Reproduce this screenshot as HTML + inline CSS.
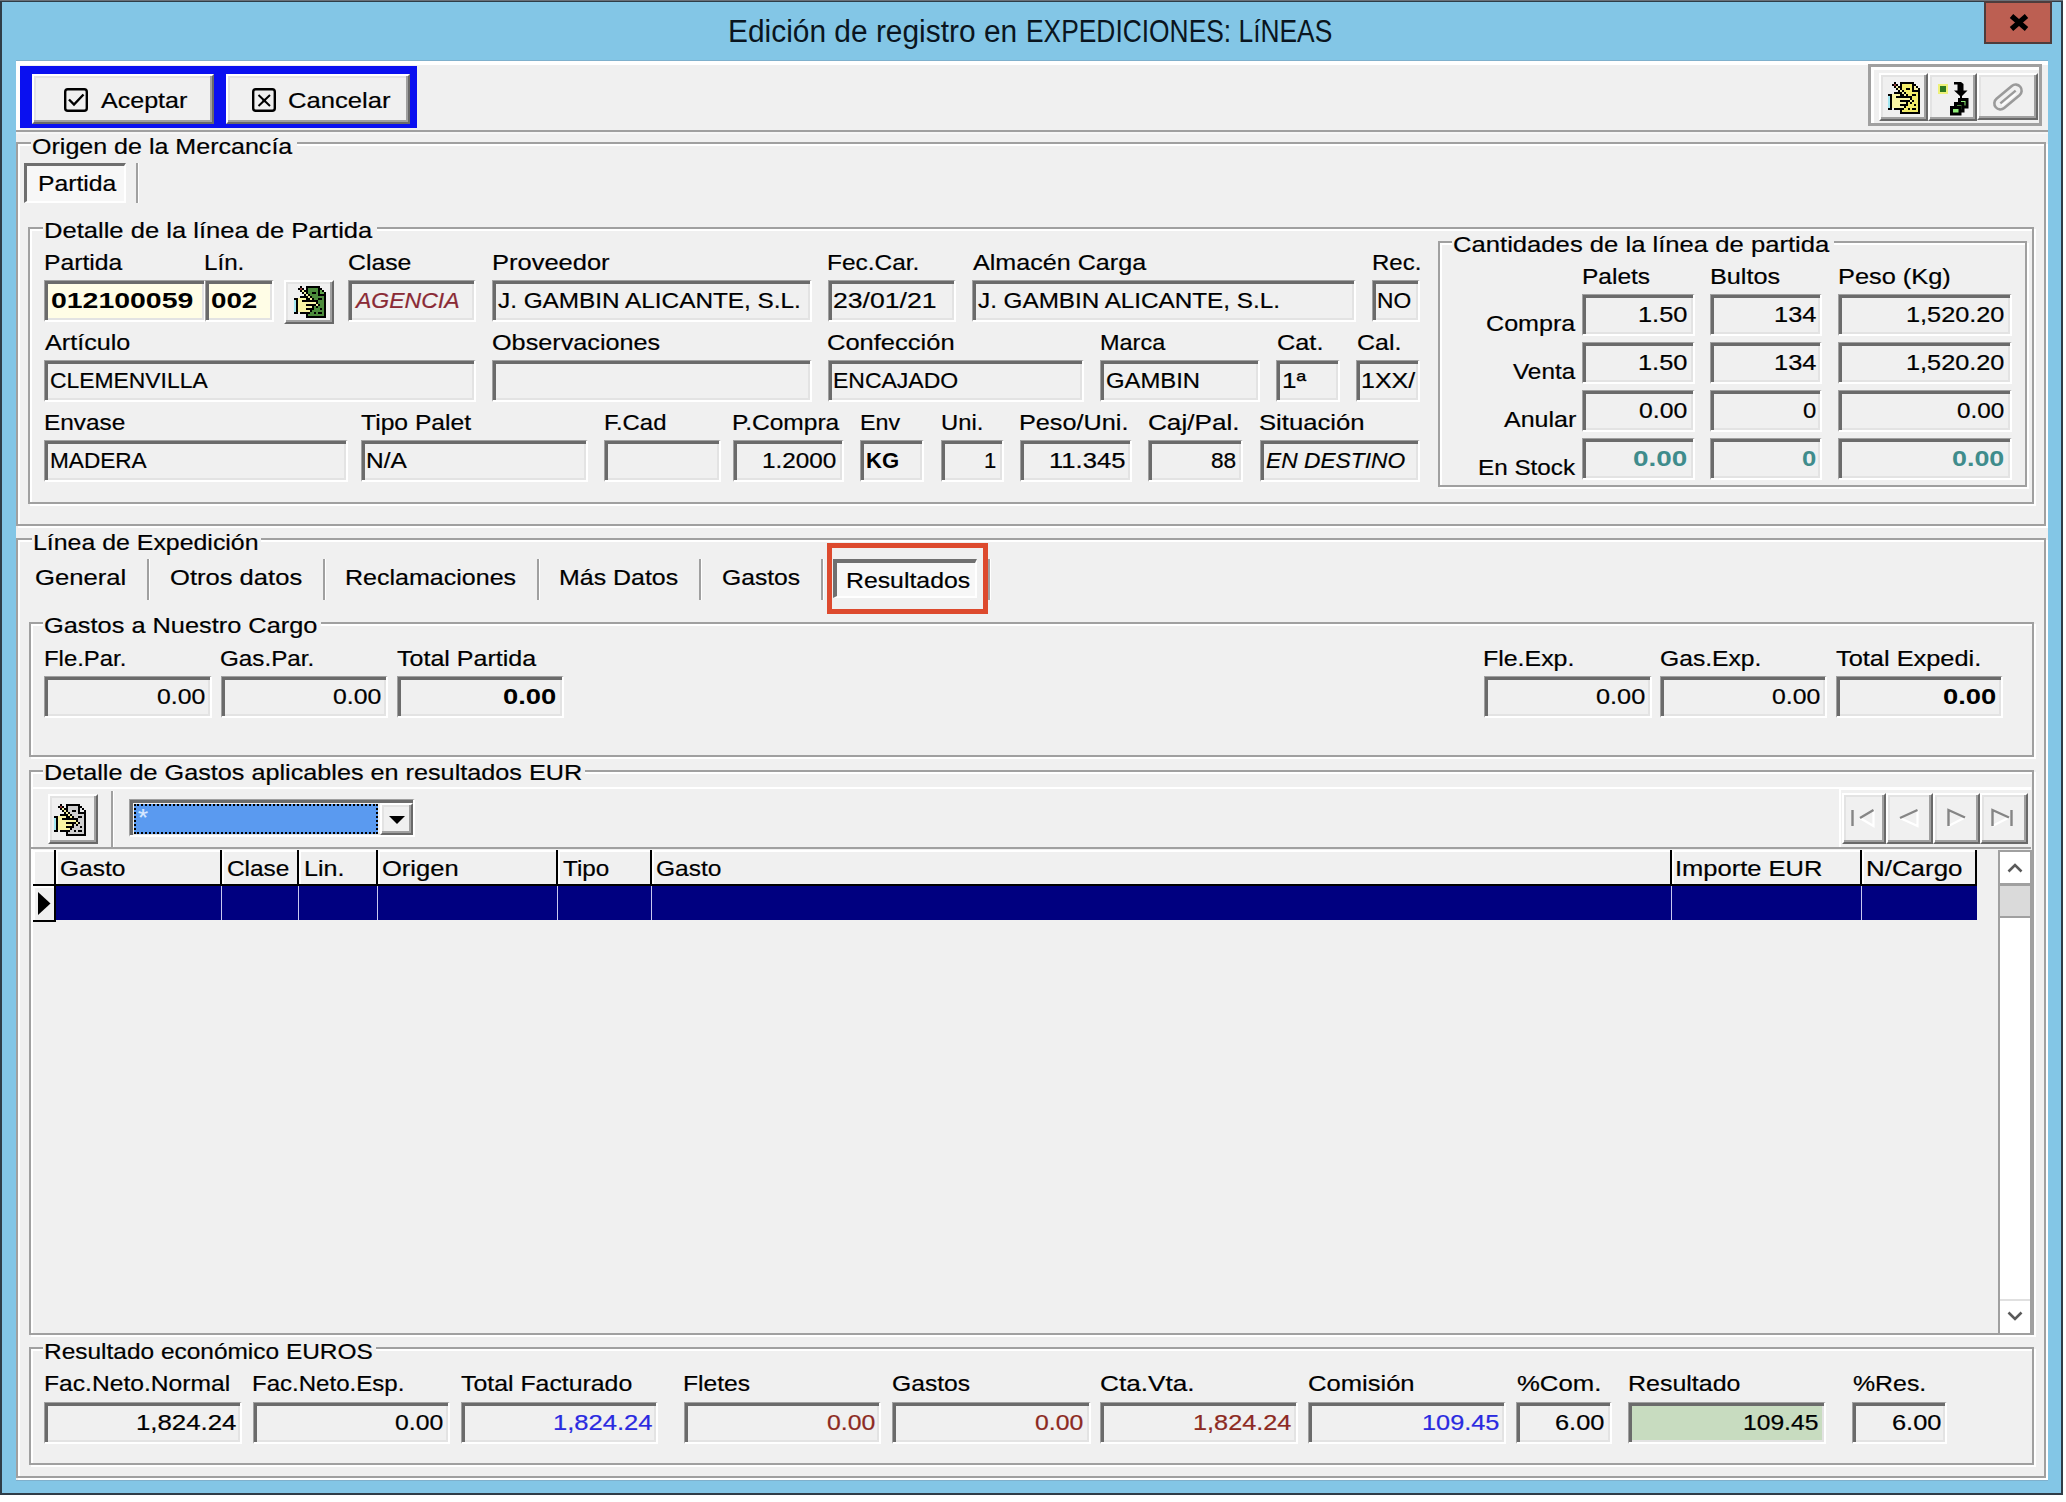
<!DOCTYPE html><html><head><meta charset="utf-8"><style>
html,body{margin:0;padding:0;}
body{width:2066px;height:1502px;position:relative;overflow:hidden;background:#fff;font-family:"Liberation Sans",sans-serif;font-size:22px;line-height:22px;color:#000;}
body>div,body>svg{position:absolute;}
.t{white-space:pre;transform-origin:0 0;-webkit-text-stroke:0.2px currentColor;}
.sk{box-sizing:border-box;border-top:1px solid #a0a0a0;border-left:1px solid #a0a0a0;border-bottom:2px solid #fff;border-right:2px solid #fff;box-shadow:inset 3px 3px 0 #6b6b6b,inset -2px -2px 0 #e3e3e3;}
.rz{box-sizing:border-box;border-top:2px solid #fff;border-left:2px solid #fff;border-bottom:2px solid #696969;border-right:2px solid #696969;box-shadow:inset -2px -2px 0 #a0a0a0,inset 2px 2px 0 #e3e3e3;}
</style></head><body>
<div style="left:0;top:0;width:2063px;height:1495px;background:#2f3d47"></div>
<div style="left:0px;top:0px;width:2063px;height:1px;background:#6a7078;"></div>
<div style="left:2px;top:2px;width:2059px;height:1491px;background:#83c6e6;"></div>
<div style="left:16px;top:60px;width:2032px;height:1px;background:#7fb0cc;"></div>
<div style="left:16px;top:61px;width:2032px;height:1420px;background:#f0f0f0;"></div>
<div style="left:16px;top:1480px;width:2032px;height:1px;background:#7fb0cc;"></div>
<div class="t" style="left:728.07px;top:16px;transform:scaleX(0.9643);font-size:31px;line-height:31px;color:#0a1520;-webkit-text-stroke:0;">Edición de registro en</div>
<div class="t" style="left:1026.30px;top:16px;transform:scaleX(0.8506);font-size:31px;line-height:31px;color:#0a1520;-webkit-text-stroke:0;">EXPEDICIONES: LíNEAS</div>
<div style="left:1984px;top:1px;width:68px;height:43px;box-sizing:border-box;border:2px solid #4e3c3c;background:#bc5f52"></div>
<svg style="left:2007px;top:12px" width="24" height="21" viewBox="0 0 24 21"><path d="M4.5 4 L19.5 17 M19.5 4 L4.5 17" stroke="#000" stroke-width="5.2" stroke-linecap="butt"/></svg>
<div style="left:16px;top:61px;width:2032px;height:4px;background:#ffffff;"></div>
<div style="left:16px;top:61px;width:4px;height:70px;background:#ffffff;"></div>
<div style="left:16px;top:130px;width:2032px;height:2px;background:#a0a0a0;"></div>
<div style="left:16px;top:132px;width:2032px;height:2px;background:#f6f6f6;"></div>
<div style="left:20px;top:66px;width:397px;height:62px;background:#0a10f0;"></div>
<div class="rz" style="left:32px;top:74px;width:182px;height:50px;background:#f0f0f0;"></div>
<div class="rz" style="left:226px;top:74px;width:184px;height:50px;background:#f0f0f0;"></div>
<svg style="left:64px;top:88px" width="26" height="26" viewBox="0 0 26 26"><rect x="1.2" y="1.2" width="21.6" height="21.6" rx="2.6" fill="none" stroke="#000" stroke-width="2.4"/><path d="M5 11.5 L10 16.5 L19.5 6.5" fill="none" stroke="#000" stroke-width="2.4"/></svg>
<div class="t" style="left:101.00px;top:90px;transform:scaleX(1.1392);">Aceptar</div>
<svg style="left:252px;top:88px" width="26" height="26" viewBox="0 0 26 26"><rect x="1.2" y="1.2" width="21.6" height="21.6" rx="2.6" fill="none" stroke="#000" stroke-width="2.4"/><path d="M6.5 7 L18 18 M18 7 L6.5 18" fill="none" stroke="#000" stroke-width="2"/><circle cx="12.25" cy="12.5" r="1.8" fill="#000"/></svg>
<div class="t" style="left:287.84px;top:90px;transform:scaleX(1.1647);">Cancelar</div>
<div style="left:1868px;top:64px;width:174px;height:62px;box-sizing:border-box;border:3px solid #a0a0a0"></div>
<div style="left:1871px;top:67px;width:168px;height:3px;background:#ffffff;"></div>
<div style="left:1871px;top:67px;width:3px;height:56px;background:#ffffff;"></div>
<div class="rz" style="left:1879px;top:73px;width:49px;height:48px;background:#f0f0f0;"></div>
<div class="rz" style="left:1928px;top:73px;width:49px;height:48px;background:#f0f0f0;"></div>
<div class="rz" style="left:1977px;top:73px;width:61px;height:47px;background:#f0f0f0;"></div>
<svg style="left:1888px;top:82px" width="32" height="32" viewBox="0 0 32 32" shape-rendering="crispEdges"><rect x="6" y="0" width="2" height="2" fill="#000"/><rect x="12" y="0" width="14" height="2" fill="#000"/><rect x="4" y="2" width="2" height="2" fill="#000"/><rect x="6" y="2" width="2" height="2" fill="#8e3b3b"/><rect x="8" y="2" width="2" height="2" fill="#000"/><rect x="12" y="2" width="2" height="2" fill="#000"/><rect x="14" y="2" width="10" height="2" fill="#f2ec6a"/><rect x="24" y="2" width="4" height="2" fill="#000"/><rect x="6" y="4" width="2" height="2" fill="#000"/><rect x="8" y="4" width="2" height="2" fill="#f2eea0"/><rect x="10" y="4" width="4" height="2" fill="#000"/><rect x="14" y="4" width="10" height="2" fill="#f2ec6a"/><rect x="24" y="4" width="2" height="2" fill="#000"/><rect x="26" y="4" width="2" height="2" fill="#f6f2a8"/><rect x="28" y="4" width="2" height="2" fill="#000"/><rect x="8" y="6" width="2" height="2" fill="#000"/><rect x="10" y="6" width="2" height="2" fill="#f2eea0"/><rect x="12" y="6" width="2" height="2" fill="#000"/><rect x="14" y="6" width="4" height="2" fill="#f2ec6a"/><rect x="18" y="6" width="4" height="2" fill="#000"/><rect x="22" y="6" width="2" height="2" fill="#f2ec6a"/><rect x="24" y="6" width="2" height="2" fill="#000"/><rect x="26" y="6" width="4" height="2" fill="#f6f2a8"/><rect x="30" y="6" width="2" height="2" fill="#000"/><rect x="10" y="8" width="2" height="2" fill="#000"/><rect x="12" y="8" width="2" height="2" fill="#f2eea0"/><rect x="14" y="8" width="2" height="2" fill="#000"/><rect x="16" y="8" width="8" height="2" fill="#f2ec6a"/><rect x="24" y="8" width="8" height="2" fill="#000"/><rect x="6" y="10" width="8" height="2" fill="#000"/><rect x="14" y="10" width="2" height="2" fill="#f2eea0"/><rect x="16" y="10" width="2" height="2" fill="#000"/><rect x="18" y="10" width="12" height="2" fill="#f2ec6a"/><rect x="30" y="10" width="2" height="2" fill="#000"/><rect x="0" y="12" width="4" height="2" fill="#000"/><rect x="4" y="12" width="8" height="2" fill="#f8f4a4"/><rect x="12" y="12" width="4" height="2" fill="#000"/><rect x="16" y="12" width="2" height="2" fill="#f2eea0"/><rect x="18" y="12" width="2" height="2" fill="#000"/><rect x="20" y="12" width="4" height="2" fill="#f2ec6a"/><rect x="24" y="12" width="4" height="2" fill="#000"/><rect x="28" y="12" width="2" height="2" fill="#f2ec6a"/><rect x="30" y="12" width="2" height="2" fill="#000"/><rect x="0" y="14" width="2" height="2" fill="#a4e8f2"/><rect x="2" y="14" width="2" height="2" fill="#000"/><rect x="4" y="14" width="4" height="2" fill="#f8f4a4"/><rect x="8" y="14" width="16" height="2" fill="#000"/><rect x="24" y="14" width="6" height="2" fill="#f2ec6a"/><rect x="30" y="14" width="2" height="2" fill="#000"/><rect x="0" y="16" width="2" height="2" fill="#a4e8f2"/><rect x="2" y="16" width="2" height="2" fill="#000"/><rect x="4" y="16" width="18" height="2" fill="#f8f4a4"/><rect x="22" y="16" width="2" height="2" fill="#000"/><rect x="24" y="16" width="6" height="2" fill="#f2ec6a"/><rect x="30" y="16" width="2" height="2" fill="#000"/><rect x="0" y="18" width="2" height="2" fill="#a4e8f2"/><rect x="2" y="18" width="2" height="2" fill="#000"/><rect x="4" y="18" width="8" height="2" fill="#f8f4a4"/><rect x="12" y="18" width="10" height="2" fill="#000"/><rect x="22" y="18" width="2" height="2" fill="#f2eea0"/><rect x="24" y="18" width="2" height="2" fill="#000"/><rect x="26" y="18" width="4" height="2" fill="#f2ec6a"/><rect x="30" y="18" width="2" height="2" fill="#000"/><rect x="0" y="20" width="2" height="2" fill="#a4e8f2"/><rect x="2" y="20" width="2" height="2" fill="#000"/><rect x="4" y="20" width="14" height="2" fill="#f8f4a4"/><rect x="18" y="20" width="2" height="2" fill="#000"/><rect x="20" y="20" width="2" height="2" fill="#f2ec6a"/><rect x="22" y="20" width="2" height="2" fill="#000"/><rect x="24" y="20" width="6" height="2" fill="#f2ec6a"/><rect x="30" y="20" width="2" height="2" fill="#000"/><rect x="0" y="22" width="2" height="2" fill="#a4e8f2"/><rect x="2" y="22" width="2" height="2" fill="#000"/><rect x="4" y="22" width="8" height="2" fill="#f8f4a4"/><rect x="12" y="22" width="8" height="2" fill="#000"/><rect x="20" y="22" width="6" height="2" fill="#f2ec6a"/><rect x="26" y="22" width="2" height="2" fill="#000"/><rect x="28" y="22" width="2" height="2" fill="#f2ec6a"/><rect x="30" y="22" width="2" height="2" fill="#000"/><rect x="0" y="24" width="2" height="2" fill="#a4e8f2"/><rect x="2" y="24" width="2" height="2" fill="#000"/><rect x="4" y="24" width="12" height="2" fill="#f8f4a4"/><rect x="16" y="24" width="2" height="2" fill="#000"/><rect x="18" y="24" width="12" height="2" fill="#f2ec6a"/><rect x="30" y="24" width="2" height="2" fill="#000"/><rect x="0" y="26" width="4" height="2" fill="#000"/><rect x="6" y="26" width="10" height="2" fill="#000"/><rect x="16" y="26" width="4" height="2" fill="#f2ec6a"/><rect x="20" y="26" width="2" height="2" fill="#000"/><rect x="22" y="26" width="2" height="2" fill="#f2ec6a"/><rect x="24" y="26" width="4" height="2" fill="#000"/><rect x="28" y="26" width="2" height="2" fill="#f2ec6a"/><rect x="30" y="26" width="2" height="2" fill="#000"/><rect x="12" y="28" width="2" height="2" fill="#000"/><rect x="14" y="28" width="16" height="2" fill="#f2ec6a"/><rect x="30" y="28" width="2" height="2" fill="#000"/><rect x="12" y="30" width="20" height="2" fill="#000"/></svg>
<svg style="left:1936px;top:80px" width="36" height="38" viewBox="0 0 36 38"><rect x="2" y="4" width="10" height="10" fill="#eef27a"/><rect x="4" y="6" width="6" height="6" fill="#2e7a22"/><path d="M18 2 H25 L27.5 4 V10.5 H31.5 L25 17 L18 10.5 H21.5 V4.5 H18 Z" fill="#000"/><rect x="24" y="16" width="2" height="3" fill="#000"/><rect x="23.5" y="19.5" width="7.5" height="7.5" fill="#90ee78" stroke="#000" stroke-width="3"/><rect x="19.5" y="23.5" width="7.5" height="7.5" fill="#4e8a3e" stroke="#000" stroke-width="3"/><rect x="15.5" y="27.5" width="8.5" height="6.5" fill="#90ee78" stroke="#000" stroke-width="3"/></svg>
<svg style="left:1990px;top:80px" width="36" height="34" viewBox="0 0 36 34"><g transform="rotate(-40 18 17)"><rect x="2" y="11" width="32" height="12" rx="6" fill="none" stroke="#9a9a9a" stroke-width="2.6"/><path d="M8 17 H28" stroke="#9a9a9a" stroke-width="2.4"/><path d="M8 19.5 H26" stroke="#fff" stroke-width="1.5"/></g></svg>
<div style="left:18px;top:144px;width:2030px;height:384px;box-sizing:border-box;border:2px solid #fff"></div>
<div style="left:16px;top:142px;width:2030px;height:384px;box-sizing:border-box;border:2px solid #a0a0a0"></div>
<div style="left:31px;top:141px;width:266px;height:6px;background:#f0f0f0;"></div>
<div class="t" style="left:31.86px;top:136px;transform:scaleX(1.1382);">Origen de la Mercancía</div>
<div style="left:24px;top:163px;width:102px;height:40px;box-sizing:border-box;border-top:3px solid #6e6e6e;border-left:3px solid #6e6e6e;border-bottom:2px solid #fff;border-right:2px solid #fff;background:#f7f7f7"></div>
<div class="t" style="left:37.88px;top:173px;transform:scaleX(1.1228);">Partida</div>
<div style="left:136px;top:163px;width:2px;height:40px;background:#a0a0a0;"></div>
<div style="left:138px;top:163px;width:1px;height:40px;background:#ffffff;"></div>
<div style="left:30px;top:229px;width:2006px;height:277px;box-sizing:border-box;border:2px solid #fff"></div>
<div style="left:28px;top:227px;width:2006px;height:277px;box-sizing:border-box;border:2px solid #a0a0a0"></div>
<div style="left:43px;top:226px;width:334px;height:6px;background:#f0f0f0;"></div>
<div class="t" style="left:43.84px;top:220px;transform:scaleX(1.1619);">Detalle de la línea de Partida</div>
<div class="t" style="left:43.88px;top:252px;transform:scaleX(1.1228);">Partida</div>
<div class="t" style="left:203.90px;top:252px;transform:scaleX(1.0988);">Lín.</div>
<div class="t" style="left:347.87px;top:252px;transform:scaleX(1.1271);">Clase</div>
<div class="t" style="left:491.84px;top:252px;transform:scaleX(1.1580);">Proveedor</div>
<div class="t" style="left:826.89px;top:252px;transform:scaleX(1.1108);">Fec.Car.</div>
<div class="t" style="left:973.00px;top:252px;transform:scaleX(1.1418);">Almacén Carga</div>
<div class="t" style="left:1371.91px;top:252px;transform:scaleX(1.0899);">Rec.</div>
<div class="sk" style="left:44px;top:280px;width:162px;height:42px;background:#fffde6;"></div>
<div class="t" style="left:51.00px;top:290px;transform:scaleX(1.2923);font-weight:bold;-webkit-text-stroke:0;">012100059</div>
<div class="sk" style="left:205px;top:280px;width:69px;height:42px;background:#fffde6;"></div>
<div class="t" style="left:211.00px;top:290px;transform:scaleX(1.2613);font-weight:bold;-webkit-text-stroke:0;">002</div>
<div class="rz" style="left:284px;top:280px;width:50px;height:44px;background:#f0f0f0;"></div>
<svg style="left:294px;top:286px" width="32" height="32" viewBox="0 0 32 32" shape-rendering="crispEdges"><rect x="6" y="0" width="2" height="2" fill="#000"/><rect x="12" y="0" width="14" height="2" fill="#000"/><rect x="4" y="2" width="2" height="2" fill="#000"/><rect x="6" y="2" width="2" height="2" fill="#8e3b3b"/><rect x="8" y="2" width="2" height="2" fill="#000"/><rect x="12" y="2" width="2" height="2" fill="#000"/><rect x="14" y="2" width="10" height="2" fill="#4c8c3c"/><rect x="24" y="2" width="4" height="2" fill="#000"/><rect x="6" y="4" width="2" height="2" fill="#000"/><rect x="8" y="4" width="2" height="2" fill="#f2eea0"/><rect x="10" y="4" width="4" height="2" fill="#000"/><rect x="14" y="4" width="10" height="2" fill="#4c8c3c"/><rect x="24" y="4" width="2" height="2" fill="#000"/><rect x="26" y="4" width="2" height="2" fill="#5ea44a"/><rect x="28" y="4" width="2" height="2" fill="#000"/><rect x="8" y="6" width="2" height="2" fill="#000"/><rect x="10" y="6" width="2" height="2" fill="#f2eea0"/><rect x="12" y="6" width="2" height="2" fill="#000"/><rect x="14" y="6" width="4" height="2" fill="#4c8c3c"/><rect x="18" y="6" width="4" height="2" fill="#000"/><rect x="22" y="6" width="2" height="2" fill="#4c8c3c"/><rect x="24" y="6" width="2" height="2" fill="#000"/><rect x="26" y="6" width="4" height="2" fill="#5ea44a"/><rect x="30" y="6" width="2" height="2" fill="#000"/><rect x="10" y="8" width="2" height="2" fill="#000"/><rect x="12" y="8" width="2" height="2" fill="#f2eea0"/><rect x="14" y="8" width="2" height="2" fill="#000"/><rect x="16" y="8" width="8" height="2" fill="#4c8c3c"/><rect x="24" y="8" width="8" height="2" fill="#000"/><rect x="6" y="10" width="8" height="2" fill="#000"/><rect x="14" y="10" width="2" height="2" fill="#f2eea0"/><rect x="16" y="10" width="2" height="2" fill="#000"/><rect x="18" y="10" width="12" height="2" fill="#4c8c3c"/><rect x="30" y="10" width="2" height="2" fill="#000"/><rect x="0" y="12" width="4" height="2" fill="#000"/><rect x="4" y="12" width="8" height="2" fill="#f8f4a4"/><rect x="12" y="12" width="4" height="2" fill="#000"/><rect x="16" y="12" width="2" height="2" fill="#f2eea0"/><rect x="18" y="12" width="2" height="2" fill="#000"/><rect x="20" y="12" width="4" height="2" fill="#4c8c3c"/><rect x="24" y="12" width="4" height="2" fill="#000"/><rect x="28" y="12" width="2" height="2" fill="#4c8c3c"/><rect x="30" y="12" width="2" height="2" fill="#000"/><rect x="0" y="14" width="2" height="2" fill="#a4e8f2"/><rect x="2" y="14" width="2" height="2" fill="#000"/><rect x="4" y="14" width="4" height="2" fill="#f8f4a4"/><rect x="8" y="14" width="16" height="2" fill="#000"/><rect x="24" y="14" width="6" height="2" fill="#4c8c3c"/><rect x="30" y="14" width="2" height="2" fill="#000"/><rect x="0" y="16" width="2" height="2" fill="#a4e8f2"/><rect x="2" y="16" width="2" height="2" fill="#000"/><rect x="4" y="16" width="18" height="2" fill="#f8f4a4"/><rect x="22" y="16" width="2" height="2" fill="#000"/><rect x="24" y="16" width="6" height="2" fill="#4c8c3c"/><rect x="30" y="16" width="2" height="2" fill="#000"/><rect x="0" y="18" width="2" height="2" fill="#a4e8f2"/><rect x="2" y="18" width="2" height="2" fill="#000"/><rect x="4" y="18" width="8" height="2" fill="#f8f4a4"/><rect x="12" y="18" width="10" height="2" fill="#000"/><rect x="22" y="18" width="2" height="2" fill="#f2eea0"/><rect x="24" y="18" width="2" height="2" fill="#000"/><rect x="26" y="18" width="4" height="2" fill="#4c8c3c"/><rect x="30" y="18" width="2" height="2" fill="#000"/><rect x="0" y="20" width="2" height="2" fill="#a4e8f2"/><rect x="2" y="20" width="2" height="2" fill="#000"/><rect x="4" y="20" width="14" height="2" fill="#f8f4a4"/><rect x="18" y="20" width="2" height="2" fill="#000"/><rect x="20" y="20" width="2" height="2" fill="#4c8c3c"/><rect x="22" y="20" width="2" height="2" fill="#000"/><rect x="24" y="20" width="6" height="2" fill="#4c8c3c"/><rect x="30" y="20" width="2" height="2" fill="#000"/><rect x="0" y="22" width="2" height="2" fill="#a4e8f2"/><rect x="2" y="22" width="2" height="2" fill="#000"/><rect x="4" y="22" width="8" height="2" fill="#f8f4a4"/><rect x="12" y="22" width="8" height="2" fill="#000"/><rect x="20" y="22" width="6" height="2" fill="#4c8c3c"/><rect x="26" y="22" width="2" height="2" fill="#000"/><rect x="28" y="22" width="2" height="2" fill="#4c8c3c"/><rect x="30" y="22" width="2" height="2" fill="#000"/><rect x="0" y="24" width="2" height="2" fill="#a4e8f2"/><rect x="2" y="24" width="2" height="2" fill="#000"/><rect x="4" y="24" width="12" height="2" fill="#f8f4a4"/><rect x="16" y="24" width="2" height="2" fill="#000"/><rect x="18" y="24" width="12" height="2" fill="#4c8c3c"/><rect x="30" y="24" width="2" height="2" fill="#000"/><rect x="0" y="26" width="4" height="2" fill="#000"/><rect x="6" y="26" width="10" height="2" fill="#000"/><rect x="16" y="26" width="4" height="2" fill="#4c8c3c"/><rect x="20" y="26" width="2" height="2" fill="#000"/><rect x="22" y="26" width="2" height="2" fill="#4c8c3c"/><rect x="24" y="26" width="4" height="2" fill="#000"/><rect x="28" y="26" width="2" height="2" fill="#4c8c3c"/><rect x="30" y="26" width="2" height="2" fill="#000"/><rect x="12" y="28" width="2" height="2" fill="#000"/><rect x="14" y="28" width="16" height="2" fill="#4c8c3c"/><rect x="30" y="28" width="2" height="2" fill="#000"/><rect x="12" y="30" width="20" height="2" fill="#000"/></svg>
<div class="sk" style="left:348px;top:280px;width:128px;height:42px;background:#f0f0f0;"></div>
<div class="t" style="left:356.09px;top:290px;transform:scaleX(1.0464);font-style:italic;color:#8a2a35;">AGENCIA</div>
<div class="sk" style="left:492px;top:280px;width:320px;height:42px;background:#f0f0f0;"></div>
<div class="t" style="left:498.00px;top:290px;transform:scaleX(1.1060);">J. GAMBIN ALICANTE, S.L.</div>
<div class="sk" style="left:828px;top:280px;width:128px;height:42px;background:#f0f0f0;"></div>
<div class="t" style="left:832.79px;top:290px;transform:scaleX(1.2085);">23/01/21</div>
<div class="sk" style="left:972px;top:280px;width:384px;height:42px;background:#f0f0f0;"></div>
<div class="t" style="left:978.00px;top:290px;transform:scaleX(1.1024);">J. GAMBIN ALICANTE, S.L.</div>
<div class="sk" style="left:1372px;top:280px;width:48px;height:42px;background:#f0f0f0;"></div>
<div class="t" style="left:1376.97px;top:290px;transform:scaleX(1.0349);">NO</div>
<div class="t" style="left:45.00px;top:332px;transform:scaleX(1.1433);">Artículo</div>
<div class="t" style="left:491.85px;top:332px;transform:scaleX(1.1459);">Observaciones</div>
<div class="t" style="left:826.84px;top:332px;transform:scaleX(1.1592);">Confección</div>
<div class="t" style="left:1099.93px;top:332px;transform:scaleX(1.0675);">Marca</div>
<div class="t" style="left:1276.85px;top:332px;transform:scaleX(1.1508);">Cat.</div>
<div class="t" style="left:1356.87px;top:332px;transform:scaleX(1.1348);">Cal.</div>
<div class="sk" style="left:44px;top:360px;width:432px;height:42px;background:#f0f0f0;"></div>
<div class="t" style="left:49.96px;top:370px;transform:scaleX(1.0401);">CLEMENVILLA</div>
<div class="sk" style="left:492px;top:360px;width:320px;height:42px;background:#f0f0f0;"></div>
<div class="sk" style="left:828px;top:360px;width:256px;height:42px;background:#f0f0f0;"></div>
<div class="t" style="left:832.96px;top:370px;transform:scaleX(1.0448);">ENCAJADO</div>
<div class="sk" style="left:1100px;top:360px;width:160px;height:42px;background:#f0f0f0;"></div>
<div class="t" style="left:1105.92px;top:370px;transform:scaleX(1.0836);">GAMBIN</div>
<div class="sk" style="left:1276px;top:360px;width:64px;height:42px;background:#f0f0f0;"></div>
<div class="t" style="left:1281.81px;top:370px;transform:scaleX(1.1860);">1ª</div>
<div class="sk" style="left:1356px;top:360px;width:64px;height:42px;background:#f0f0f0;"></div>
<div class="t" style="left:1360.87px;top:370px;transform:scaleX(1.1349);">1XX/</div>
<div class="t" style="left:43.89px;top:412px;transform:scaleX(1.1089);">Envase</div>
<div class="t" style="left:361.00px;top:412px;transform:scaleX(1.1210);">Tipo Palet</div>
<div class="t" style="left:603.91px;top:412px;transform:scaleX(1.0863);">F.Cad</div>
<div class="t" style="left:731.88px;top:412px;transform:scaleX(1.1150);">P.Compra</div>
<div class="t" style="left:859.94px;top:412px;transform:scaleX(1.0566);">Env</div>
<div class="t" style="left:940.92px;top:412px;transform:scaleX(1.0808);">Uni.</div>
<div class="t" style="left:1018.85px;top:412px;transform:scaleX(1.1472);">Peso/Uni.</div>
<div class="t" style="left:1147.81px;top:412px;transform:scaleX(1.1879);">Caj/Pal.</div>
<div class="t" style="left:1258.83px;top:412px;transform:scaleX(1.1669);">Situación</div>
<div class="sk" style="left:44px;top:440px;width:304px;height:42px;background:#f0f0f0;"></div>
<div class="t" style="left:49.97px;top:450px;transform:scaleX(1.0273);">MADERA</div>
<div class="sk" style="left:361px;top:440px;width:227px;height:42px;background:#f0f0f0;"></div>
<div class="t" style="left:365.89px;top:450px;transform:scaleX(1.1111);">N/A</div>
<div class="sk" style="left:604px;top:440px;width:117px;height:42px;background:#f0f0f0;"></div>
<div class="sk" style="left:733px;top:440px;width:111px;height:42px;background:#f0f0f0;"></div>
<div class="t" style="left:761.89px;top:450px;transform:scaleX(1.1052);">1.2000</div>
<div class="sk" style="left:860px;top:440px;width:64px;height:42px;background:#f0f0f0;"></div>
<div class="t" style="left:866.00px;top:450px;transform:scaleX(1.0036);font-weight:bold;-webkit-text-stroke:0;">KG</div>
<div class="sk" style="left:941px;top:440px;width:63px;height:42px;background:#f0f0f0;"></div>
<div class="t" style="left:984.00px;top:450px;transform:scaleX(1.0000);">1</div>
<div class="sk" style="left:1020px;top:440px;width:112px;height:42px;background:#f0f0f0;"></div>
<div class="t" style="left:1048.84px;top:450px;transform:scaleX(1.1642);">11.345</div>
<div class="sk" style="left:1148px;top:440px;width:95px;height:42px;background:#f0f0f0;"></div>
<div class="t" style="left:1211.00px;top:450px;transform:scaleX(1.0316);">88</div>
<div class="sk" style="left:1260px;top:440px;width:160px;height:42px;background:#f0f0f0;"></div>
<div class="t" style="left:1266.00px;top:450px;transform:scaleX(1.0346);font-style:italic;">EN DESTINO</div>
<div style="left:1440px;top:243px;width:589px;height:246px;box-sizing:border-box;border:2px solid #fff"></div>
<div style="left:1438px;top:241px;width:589px;height:246px;box-sizing:border-box;border:2px solid #a0a0a0"></div>
<div style="left:1452px;top:240px;width:382px;height:6px;background:#f0f0f0;"></div>
<div class="t" style="left:1452.83px;top:234px;transform:scaleX(1.1653);">Cantidades de la línea de partida</div>
<div class="t" style="left:1581.89px;top:266px;transform:scaleX(1.1140);">Palets</div>
<div class="t" style="left:1709.85px;top:266px;transform:scaleX(1.1472);">Bultos</div>
<div class="t" style="left:1837.85px;top:266px;transform:scaleX(1.1519);">Peso (Kg)</div>
<div class="t" style="left:1485.86px;top:313px;transform:scaleX(1.1409);">Compra</div>
<div class="sk" style="left:1582px;top:294px;width:113px;height:42px;background:#f0f0f0;"></div>
<div class="t" style="left:1637.85px;top:304px;transform:scaleX(1.1543);">1.50</div>
<div class="sk" style="left:1710px;top:294px;width:112px;height:42px;background:#f0f0f0;"></div>
<div class="t" style="left:1773.84px;top:304px;transform:scaleX(1.1559);">134</div>
<div class="sk" style="left:1838px;top:294px;width:174px;height:42px;background:#f0f0f0;"></div>
<div class="t" style="left:1905.85px;top:304px;transform:scaleX(1.1493);">1,520.20</div>
<div class="t" style="left:1513.00px;top:361px;transform:scaleX(1.1044);">Venta</div>
<div class="sk" style="left:1582px;top:342px;width:113px;height:42px;background:#f0f0f0;"></div>
<div class="t" style="left:1637.85px;top:352px;transform:scaleX(1.1543);">1.50</div>
<div class="sk" style="left:1710px;top:342px;width:112px;height:42px;background:#f0f0f0;"></div>
<div class="t" style="left:1773.84px;top:352px;transform:scaleX(1.1559);">134</div>
<div class="sk" style="left:1838px;top:342px;width:174px;height:42px;background:#f0f0f0;"></div>
<div class="t" style="left:1905.85px;top:352px;transform:scaleX(1.1493);">1,520.20</div>
<div class="t" style="left:1504.00px;top:409px;transform:scaleX(1.1380);">Anular</div>
<div class="sk" style="left:1582px;top:390px;width:113px;height:42px;background:#f0f0f0;"></div>
<div class="t" style="left:1639.00px;top:400px;transform:scaleX(1.1272);">0.00</div>
<div class="sk" style="left:1710px;top:390px;width:112px;height:42px;background:#f0f0f0;"></div>
<div class="t" style="left:1803.00px;top:400px;transform:scaleX(1.0833);">0</div>
<div class="sk" style="left:1838px;top:390px;width:174px;height:42px;background:#f0f0f0;"></div>
<div class="t" style="left:1957.00px;top:400px;transform:scaleX(1.1037);">0.00</div>
<div class="t" style="left:1477.90px;top:457px;transform:scaleX(1.1017);">En Stock</div>
<div class="sk" style="left:1582px;top:438px;width:113px;height:42px;background:#f0f0f0;"></div>
<div class="t" style="left:1633.00px;top:448px;transform:scaleX(1.2681);font-weight:bold;-webkit-text-stroke:0;color:#3f8c8c;">0.00</div>
<div class="sk" style="left:1710px;top:438px;width:112px;height:42px;background:#f0f0f0;"></div>
<div class="t" style="left:1802.00px;top:448px;transform:scaleX(1.1667);font-weight:bold;-webkit-text-stroke:0;color:#3f8c8c;">0</div>
<div class="sk" style="left:1838px;top:438px;width:174px;height:42px;background:#f0f0f0;"></div>
<div class="t" style="left:1952.00px;top:448px;transform:scaleX(1.2211);font-weight:bold;-webkit-text-stroke:0;color:#3f8c8c;">0.00</div>
<div style="left:18px;top:540px;width:2030px;height:940px;box-sizing:border-box;border:2px solid #fff"></div>
<div style="left:16px;top:538px;width:2030px;height:940px;box-sizing:border-box;border:2px solid #a0a0a0"></div>
<div style="left:32px;top:537px;width:229px;height:6px;background:#f0f0f0;"></div>
<div class="t" style="left:32.87px;top:532px;transform:scaleX(1.1312);">Línea de Expedición</div>
<div class="t" style="left:34.83px;top:567px;transform:scaleX(1.1652);">General</div>
<div class="t" style="left:169.84px;top:567px;transform:scaleX(1.1622);">Otros datos</div>
<div class="t" style="left:344.86px;top:567px;transform:scaleX(1.1379);">Reclamaciones</div>
<div class="t" style="left:558.87px;top:567px;transform:scaleX(1.1330);">Más Datos</div>
<div class="t" style="left:721.88px;top:567px;transform:scaleX(1.1209);">Gastos</div>
<div style="left:147px;top:559px;width:2px;height:41px;background:#a0a0a0;"></div>
<div style="left:149px;top:559px;width:1px;height:41px;background:#ffffff;"></div>
<div style="left:323px;top:559px;width:2px;height:41px;background:#a0a0a0;"></div>
<div style="left:325px;top:559px;width:1px;height:41px;background:#ffffff;"></div>
<div style="left:537px;top:559px;width:2px;height:41px;background:#a0a0a0;"></div>
<div style="left:539px;top:559px;width:1px;height:41px;background:#ffffff;"></div>
<div style="left:699px;top:559px;width:2px;height:41px;background:#a0a0a0;"></div>
<div style="left:701px;top:559px;width:1px;height:41px;background:#ffffff;"></div>
<div style="left:821px;top:559px;width:2px;height:41px;background:#a0a0a0;"></div>
<div style="left:823px;top:559px;width:1px;height:41px;background:#ffffff;"></div>
<div style="left:988px;top:559px;width:2px;height:41px;background:#a0a0a0;"></div>
<div style="left:990px;top:559px;width:1px;height:41px;background:#ffffff;"></div>
<div style="left:833px;top:559px;width:144px;height:39px;box-sizing:border-box;border-top:4px solid #707070;border-left:4px solid #707070;border-bottom:2px solid #fff;border-right:2px solid #fff;background:#f7f7f7"></div>
<div class="t" style="left:845.87px;top:570px;transform:scaleX(1.1278);">Resultados</div>
<div style="left:827px;top:543px;width:161px;height:71px;box-sizing:border-box;border:5px solid #dd4a2e"></div>
<div style="left:31px;top:624px;width:2005px;height:135px;box-sizing:border-box;border:2px solid #fff"></div>
<div style="left:29px;top:622px;width:2005px;height:135px;box-sizing:border-box;border:2px solid #a0a0a0"></div>
<div style="left:43px;top:621px;width:278px;height:6px;background:#f0f0f0;"></div>
<div class="t" style="left:43.85px;top:615px;transform:scaleX(1.1526);">Gastos a Nuestro Cargo</div>
<div class="t" style="left:43.91px;top:648px;transform:scaleX(1.0856);">Fle.Par.</div>
<div class="t" style="left:219.90px;top:648px;transform:scaleX(1.1020);">Gas.Par.</div>
<div class="t" style="left:397.00px;top:648px;transform:scaleX(1.1377);">Total Partida</div>
<div class="t" style="left:1482.87px;top:648px;transform:scaleX(1.1326);">Fle.Exp.</div>
<div class="t" style="left:1659.88px;top:648px;transform:scaleX(1.1203);">Gas.Exp.</div>
<div class="t" style="left:1836.00px;top:648px;transform:scaleX(1.1534);">Total Expedi.</div>
<div class="sk" style="left:44px;top:676px;width:168px;height:42px;background:#f0f0f0;"></div>
<div class="t" style="left:157.00px;top:686px;transform:scaleX(1.1272);">0.00</div>
<div class="sk" style="left:221px;top:676px;width:167px;height:42px;background:#f0f0f0;"></div>
<div class="t" style="left:333.00px;top:686px;transform:scaleX(1.1272);">0.00</div>
<div class="sk" style="left:397px;top:676px;width:167px;height:42px;background:#f0f0f0;"></div>
<div class="t" style="left:503.00px;top:686px;transform:scaleX(1.2446);font-weight:bold;-webkit-text-stroke:0;">0.00</div>
<div class="sk" style="left:1484px;top:676px;width:168px;height:42px;background:#f0f0f0;"></div>
<div class="t" style="left:1596.00px;top:686px;transform:scaleX(1.1507);">0.00</div>
<div class="sk" style="left:1660px;top:676px;width:167px;height:42px;background:#f0f0f0;"></div>
<div class="t" style="left:1772.00px;top:686px;transform:scaleX(1.1272);">0.00</div>
<div class="sk" style="left:1836px;top:676px;width:167px;height:42px;background:#f0f0f0;"></div>
<div class="t" style="left:1943.00px;top:686px;transform:scaleX(1.2446);font-weight:bold;-webkit-text-stroke:0;">0.00</div>
<div style="left:31px;top:772px;width:2005px;height:565px;box-sizing:border-box;border:2px solid #fff"></div>
<div style="left:29px;top:770px;width:2005px;height:565px;box-sizing:border-box;border:2px solid #a0a0a0"></div>
<div style="left:43px;top:769px;width:542px;height:6px;background:#f0f0f0;"></div>
<div class="t" style="left:43.85px;top:762px;transform:scaleX(1.1460);">Detalle de Gastos aplicables en resultados EUR</div>
<div style="left:31px;top:787px;width:2000px;height:2px;background:#ffffff;"></div>
<div style="left:31px;top:787px;width:2px;height:62px;background:#ffffff;"></div>
<div style="left:31px;top:847px;width:2000px;height:2px;background:#a0a0a0;"></div>
<div style="left:111px;top:791px;width:2px;height:56px;background:#a0a0a0;"></div>
<div style="left:113px;top:791px;width:1px;height:56px;background:#ffffff;"></div>
<div class="rz" style="left:48px;top:794px;width:50px;height:50px;background:#f0f0f0;"></div>
<svg style="left:54px;top:804px" width="32" height="32" viewBox="0 0 32 32" shape-rendering="crispEdges"><rect x="6" y="0" width="2" height="2" fill="#000"/><rect x="12" y="0" width="14" height="2" fill="#000"/><rect x="4" y="2" width="2" height="2" fill="#000"/><rect x="6" y="2" width="2" height="2" fill="#8e3b3b"/><rect x="8" y="2" width="2" height="2" fill="#000"/><rect x="12" y="2" width="2" height="2" fill="#000"/><rect x="14" y="2" width="10" height="2" fill="#cfcfcf"/><rect x="24" y="2" width="4" height="2" fill="#000"/><rect x="6" y="4" width="2" height="2" fill="#000"/><rect x="8" y="4" width="2" height="2" fill="#f2eea0"/><rect x="10" y="4" width="4" height="2" fill="#000"/><rect x="14" y="4" width="10" height="2" fill="#cfcfcf"/><rect x="24" y="4" width="2" height="2" fill="#000"/><rect x="26" y="4" width="2" height="2" fill="#e6e6e6"/><rect x="28" y="4" width="2" height="2" fill="#000"/><rect x="8" y="6" width="2" height="2" fill="#000"/><rect x="10" y="6" width="2" height="2" fill="#f2eea0"/><rect x="12" y="6" width="2" height="2" fill="#000"/><rect x="14" y="6" width="4" height="2" fill="#cfcfcf"/><rect x="18" y="6" width="4" height="2" fill="#000"/><rect x="22" y="6" width="2" height="2" fill="#cfcfcf"/><rect x="24" y="6" width="2" height="2" fill="#000"/><rect x="26" y="6" width="4" height="2" fill="#e6e6e6"/><rect x="30" y="6" width="2" height="2" fill="#000"/><rect x="10" y="8" width="2" height="2" fill="#000"/><rect x="12" y="8" width="2" height="2" fill="#f2eea0"/><rect x="14" y="8" width="2" height="2" fill="#000"/><rect x="16" y="8" width="8" height="2" fill="#cfcfcf"/><rect x="24" y="8" width="8" height="2" fill="#000"/><rect x="6" y="10" width="8" height="2" fill="#000"/><rect x="14" y="10" width="2" height="2" fill="#f2eea0"/><rect x="16" y="10" width="2" height="2" fill="#000"/><rect x="18" y="10" width="12" height="2" fill="#cfcfcf"/><rect x="30" y="10" width="2" height="2" fill="#000"/><rect x="0" y="12" width="4" height="2" fill="#000"/><rect x="4" y="12" width="8" height="2" fill="#f8f4a4"/><rect x="12" y="12" width="4" height="2" fill="#000"/><rect x="16" y="12" width="2" height="2" fill="#f2eea0"/><rect x="18" y="12" width="2" height="2" fill="#000"/><rect x="20" y="12" width="4" height="2" fill="#cfcfcf"/><rect x="24" y="12" width="4" height="2" fill="#000"/><rect x="28" y="12" width="2" height="2" fill="#cfcfcf"/><rect x="30" y="12" width="2" height="2" fill="#000"/><rect x="0" y="14" width="2" height="2" fill="#a4e8f2"/><rect x="2" y="14" width="2" height="2" fill="#000"/><rect x="4" y="14" width="4" height="2" fill="#f8f4a4"/><rect x="8" y="14" width="16" height="2" fill="#000"/><rect x="24" y="14" width="6" height="2" fill="#cfcfcf"/><rect x="30" y="14" width="2" height="2" fill="#000"/><rect x="0" y="16" width="2" height="2" fill="#a4e8f2"/><rect x="2" y="16" width="2" height="2" fill="#000"/><rect x="4" y="16" width="18" height="2" fill="#f8f4a4"/><rect x="22" y="16" width="2" height="2" fill="#000"/><rect x="24" y="16" width="6" height="2" fill="#cfcfcf"/><rect x="30" y="16" width="2" height="2" fill="#000"/><rect x="0" y="18" width="2" height="2" fill="#a4e8f2"/><rect x="2" y="18" width="2" height="2" fill="#000"/><rect x="4" y="18" width="8" height="2" fill="#f8f4a4"/><rect x="12" y="18" width="10" height="2" fill="#000"/><rect x="22" y="18" width="2" height="2" fill="#f2eea0"/><rect x="24" y="18" width="2" height="2" fill="#000"/><rect x="26" y="18" width="4" height="2" fill="#cfcfcf"/><rect x="30" y="18" width="2" height="2" fill="#000"/><rect x="0" y="20" width="2" height="2" fill="#a4e8f2"/><rect x="2" y="20" width="2" height="2" fill="#000"/><rect x="4" y="20" width="14" height="2" fill="#f8f4a4"/><rect x="18" y="20" width="2" height="2" fill="#000"/><rect x="20" y="20" width="2" height="2" fill="#cfcfcf"/><rect x="22" y="20" width="2" height="2" fill="#000"/><rect x="24" y="20" width="6" height="2" fill="#cfcfcf"/><rect x="30" y="20" width="2" height="2" fill="#000"/><rect x="0" y="22" width="2" height="2" fill="#a4e8f2"/><rect x="2" y="22" width="2" height="2" fill="#000"/><rect x="4" y="22" width="8" height="2" fill="#f8f4a4"/><rect x="12" y="22" width="8" height="2" fill="#000"/><rect x="20" y="22" width="6" height="2" fill="#cfcfcf"/><rect x="26" y="22" width="2" height="2" fill="#000"/><rect x="28" y="22" width="2" height="2" fill="#cfcfcf"/><rect x="30" y="22" width="2" height="2" fill="#000"/><rect x="0" y="24" width="2" height="2" fill="#a4e8f2"/><rect x="2" y="24" width="2" height="2" fill="#000"/><rect x="4" y="24" width="12" height="2" fill="#f8f4a4"/><rect x="16" y="24" width="2" height="2" fill="#000"/><rect x="18" y="24" width="12" height="2" fill="#cfcfcf"/><rect x="30" y="24" width="2" height="2" fill="#000"/><rect x="0" y="26" width="4" height="2" fill="#000"/><rect x="6" y="26" width="10" height="2" fill="#000"/><rect x="16" y="26" width="4" height="2" fill="#cfcfcf"/><rect x="20" y="26" width="2" height="2" fill="#000"/><rect x="22" y="26" width="2" height="2" fill="#cfcfcf"/><rect x="24" y="26" width="4" height="2" fill="#000"/><rect x="28" y="26" width="2" height="2" fill="#cfcfcf"/><rect x="30" y="26" width="2" height="2" fill="#000"/><rect x="12" y="28" width="2" height="2" fill="#000"/><rect x="14" y="28" width="16" height="2" fill="#cfcfcf"/><rect x="30" y="28" width="2" height="2" fill="#000"/><rect x="12" y="30" width="20" height="2" fill="#000"/></svg>
<div class="sk" style="left:129px;top:799px;width:286px;height:38px;background:#f0f0f0;"></div>
<div style="left:134px;top:804px;width:244px;height:30px;box-sizing:border-box;background:#5a9af0;outline:2px dotted #000;outline-offset:-2px"></div>
<div class="t" style="left:138.00px;top:807px;transform:scaleX(1.1200);font-size:23px;line-height:23px;color:#d8e8ff;">*</div>
<div class="rz" style="left:380px;top:803px;width:33px;height:32px;background:#f0f0f0;"></div>
<svg style="left:388px;top:815px" width="18" height="10" viewBox="0 0 18 10"><path d="M1 1 L17 1 L9 9 Z" fill="#000"/></svg>
<div style="left:1839px;top:788px;width:192px;height:2px;background:#ffffff;"></div>
<div style="left:1839px;top:788px;width:2px;height:59px;background:#ffffff;"></div>
<div class="rz" style="left:1842px;top:793px;width:44px;height:51px;background:#f0f0f0;"></div>
<div class="rz" style="left:1886px;top:793px;width:47px;height:51px;background:#f0f0f0;"></div>
<div class="rz" style="left:1933px;top:793px;width:47px;height:51px;background:#f0f0f0;"></div>
<div class="rz" style="left:1980px;top:793px;width:48px;height:51px;background:#f0f0f0;"></div>
<svg style="left:1846px;top:808px" width="32" height="24" viewBox="0 0 32 24"><path d="M14 10 L27.5 18 V2" fill="none" stroke="#fff" stroke-width="2.2"/><path d="M6.5 18 V2 M27.5 2 L14 10" fill="none" stroke="#858585" stroke-width="2.4"/></svg>
<svg style="left:1892px;top:808px" width="32" height="24" viewBox="0 0 32 24"><path d="M8 10 L25.5 18 V2" fill="none" stroke="#fff" stroke-width="2.2"/><path d="M25.5 2 L8 10" fill="none" stroke="#858585" stroke-width="2.4"/></svg>
<svg style="left:1940px;top:808px" width="32" height="24" viewBox="0 0 32 24"><path d="M25 9.5 L8.5 18" fill="none" stroke="#fff" stroke-width="2.2"/><path d="M8.5 18 V2 L25 9.5" fill="none" stroke="#858585" stroke-width="2.4"/></svg>
<svg style="left:1986px;top:808px" width="32" height="24" viewBox="0 0 32 24"><path d="M23 9.5 L6.5 18" fill="none" stroke="#fff" stroke-width="2.2"/><path d="M6.5 18 V2 L23 9.5 M25.5 2 V18" fill="none" stroke="#858585" stroke-width="2.4"/></svg>
<div style="left:33px;top:850px;width:23px;height:34px;background:#f0f0f0;box-shadow:inset 2px 2px 0 #fff;"></div>
<div style="left:54px;top:850px;width:2px;height:36px;background:#000;"></div>
<div style="left:56px;top:850px;width:166px;height:34px;background:#f0f0f0;box-shadow:inset 2px 2px 0 #fff;"></div>
<div style="left:220px;top:850px;width:2px;height:36px;background:#000;"></div>
<div style="left:222px;top:850px;width:77px;height:34px;background:#f0f0f0;box-shadow:inset 2px 2px 0 #fff;"></div>
<div style="left:297px;top:850px;width:2px;height:36px;background:#000;"></div>
<div style="left:299px;top:850px;width:79px;height:34px;background:#f0f0f0;box-shadow:inset 2px 2px 0 #fff;"></div>
<div style="left:376px;top:850px;width:2px;height:36px;background:#000;"></div>
<div style="left:378px;top:850px;width:180px;height:34px;background:#f0f0f0;box-shadow:inset 2px 2px 0 #fff;"></div>
<div style="left:556px;top:850px;width:2px;height:36px;background:#000;"></div>
<div style="left:558px;top:850px;width:94px;height:34px;background:#f0f0f0;box-shadow:inset 2px 2px 0 #fff;"></div>
<div style="left:650px;top:850px;width:2px;height:36px;background:#000;"></div>
<div style="left:652px;top:850px;width:1020px;height:34px;background:#f0f0f0;box-shadow:inset 2px 2px 0 #fff;"></div>
<div style="left:1670px;top:850px;width:2px;height:36px;background:#000;"></div>
<div style="left:1672px;top:850px;width:190px;height:34px;background:#f0f0f0;box-shadow:inset 2px 2px 0 #fff;"></div>
<div style="left:1860px;top:850px;width:2px;height:36px;background:#000;"></div>
<div style="left:1862px;top:850px;width:115px;height:34px;background:#f0f0f0;box-shadow:inset 2px 2px 0 #fff;"></div>
<div style="left:1975px;top:850px;width:2px;height:36px;background:#000;"></div>
<div style="left:33px;top:884px;width:1944px;height:2px;background:#000;"></div>
<div style="left:56px;top:886px;width:1921px;height:34px;background:#000080;"></div>
<div style="left:221px;top:886px;width:1px;height:34px;background:#c8c8f0;"></div>
<div style="left:298px;top:886px;width:1px;height:34px;background:#c8c8f0;"></div>
<div style="left:377px;top:886px;width:1px;height:34px;background:#c8c8f0;"></div>
<div style="left:557px;top:886px;width:1px;height:34px;background:#c8c8f0;"></div>
<div style="left:651px;top:886px;width:1px;height:34px;background:#c8c8f0;"></div>
<div style="left:1671px;top:886px;width:1px;height:34px;background:#c8c8f0;"></div>
<div style="left:1861px;top:886px;width:1px;height:34px;background:#c8c8f0;"></div>
<div style="left:33px;top:886px;width:21px;height:34px;background:#f0f0f0;box-shadow:inset 2px 2px 0 #fff;"></div>
<div style="left:54px;top:886px;width:2px;height:36px;background:#000;"></div>
<div style="left:33px;top:920px;width:23px;height:2px;background:#000;"></div>
<svg style="left:38px;top:892px" width="13" height="23" viewBox="0 0 13 23"><path d="M0 0 L12.5 11.5 L0 23 Z" fill="#000"/></svg>
<div class="t" style="left:59.89px;top:858px;transform:scaleX(1.1138);">Gasto</div>
<div class="t" style="left:226.89px;top:858px;transform:scaleX(1.1089);">Clase</div>
<div class="t" style="left:303.86px;top:858px;transform:scaleX(1.1391);">Lin.</div>
<div class="t" style="left:381.84px;top:858px;transform:scaleX(1.1599);">Origen</div>
<div class="t" style="left:563.00px;top:858px;transform:scaleX(1.1019);">Tipo</div>
<div class="t" style="left:655.89px;top:858px;transform:scaleX(1.1138);">Gasto</div>
<div class="t" style="left:1674.68px;top:858px;transform:scaleX(1.1589);">Importe EUR</div>
<div class="t" style="left:1865.82px;top:858px;transform:scaleX(1.1774);">N/Cargo</div>
<div style="left:1998px;top:850px;width:34px;height:485px;background:#a0a0a0;"></div>
<div style="left:2000px;top:852px;width:30px;height:481px;background:#ffffff;"></div>
<div style="left:2000px;top:883px;width:30px;height:3px;background:#a0a0a0;"></div>
<div style="left:2000px;top:886px;width:30px;height:30px;background:#dadada;"></div>
<div style="left:2000px;top:916px;width:30px;height:2px;background:#a0a0a0;"></div>
<div style="left:2000px;top:1299px;width:30px;height:2px;background:#e0e0e0;"></div>
<svg style="left:2007px;top:862px" width="16" height="11" viewBox="0 0 16 11"><path d="M1.5 9.5 L8 3 L14.5 9.5" fill="none" stroke="#5a5a5a" stroke-width="2.6"/></svg>
<svg style="left:2007px;top:1311px" width="16" height="11" viewBox="0 0 16 11"><path d="M1.5 1.5 L8 8 L14.5 1.5" fill="none" stroke="#5a5a5a" stroke-width="2.6"/></svg>
<div style="left:31px;top:1349px;width:2005px;height:118px;box-sizing:border-box;border:2px solid #fff"></div>
<div style="left:29px;top:1347px;width:2005px;height:118px;box-sizing:border-box;border:2px solid #a0a0a0"></div>
<div style="left:43px;top:1346px;width:333px;height:6px;background:#f0f0f0;"></div>
<div class="t" style="left:43.89px;top:1341px;transform:scaleX(1.1113);">Resultado económico EUROS</div>
<div class="t" style="left:43.88px;top:1373px;transform:scaleX(1.1194);">Fac.Neto.Normal</div>
<div class="t" style="left:251.91px;top:1373px;transform:scaleX(1.0927);">Fac.Neto.Esp.</div>
<div class="t" style="left:461.00px;top:1373px;transform:scaleX(1.1294);">Total Facturado</div>
<div class="t" style="left:682.88px;top:1373px;transform:scaleX(1.1204);">Fletes</div>
<div class="t" style="left:891.88px;top:1373px;transform:scaleX(1.1209);">Gastos</div>
<div class="t" style="left:1099.81px;top:1373px;transform:scaleX(1.1891);">Cta.Vta.</div>
<div class="t" style="left:1307.84px;top:1373px;transform:scaleX(1.1625);">Comisión</div>
<div class="t" style="left:1517.00px;top:1373px;transform:scaleX(1.1688);">%Com.</div>
<div class="t" style="left:1627.87px;top:1373px;transform:scaleX(1.1346);">Resultado</div>
<div class="t" style="left:1853.00px;top:1373px;transform:scaleX(1.1306);">%Res.</div>
<div class="sk" style="left:44px;top:1402px;width:198px;height:42px;background:#f0f0f0;"></div>
<div class="t" style="left:135.83px;top:1412px;transform:scaleX(1.1730);">1,824.24</div>
<div class="sk" style="left:253px;top:1402px;width:197px;height:42px;background:#f0f0f0;"></div>
<div class="t" style="left:395.00px;top:1412px;transform:scaleX(1.1272);">0.00</div>
<div class="sk" style="left:461px;top:1402px;width:197px;height:42px;background:#f0f0f0;"></div>
<div class="t" style="left:552.84px;top:1412px;transform:scaleX(1.1611);color:#2a2ae0;">1,824.24</div>
<div class="sk" style="left:684px;top:1402px;width:197px;height:42px;background:#f0f0f0;"></div>
<div class="t" style="left:827.00px;top:1412px;transform:scaleX(1.1272);color:#8c2a22;">0.00</div>
<div class="sk" style="left:892px;top:1402px;width:199px;height:42px;background:#f0f0f0;"></div>
<div class="t" style="left:1035.00px;top:1412px;transform:scaleX(1.1272);color:#8c2a22;">0.00</div>
<div class="sk" style="left:1100px;top:1402px;width:198px;height:42px;background:#f0f0f0;"></div>
<div class="t" style="left:1192.85px;top:1412px;transform:scaleX(1.1493);color:#8c2a22;">1,824.24</div>
<div class="sk" style="left:1308px;top:1402px;width:198px;height:42px;background:#f0f0f0;"></div>
<div class="t" style="left:1421.85px;top:1412px;transform:scaleX(1.1506);color:#2a2ae0;">109.45</div>
<div class="sk" style="left:1516px;top:1402px;width:96px;height:42px;background:#f0f0f0;"></div>
<div class="t" style="left:1554.85px;top:1412px;transform:scaleX(1.1543);">6.00</div>
<div class="sk" style="left:1628px;top:1402px;width:198px;height:42px;background:#c8dcc0;"></div>
<div class="t" style="left:1742.88px;top:1412px;transform:scaleX(1.1203);">109.45</div>
<div class="sk" style="left:1852px;top:1402px;width:95px;height:42px;background:#f0f0f0;"></div>
<div class="t" style="left:1891.85px;top:1412px;transform:scaleX(1.1543);">6.00</div>
</body></html>
